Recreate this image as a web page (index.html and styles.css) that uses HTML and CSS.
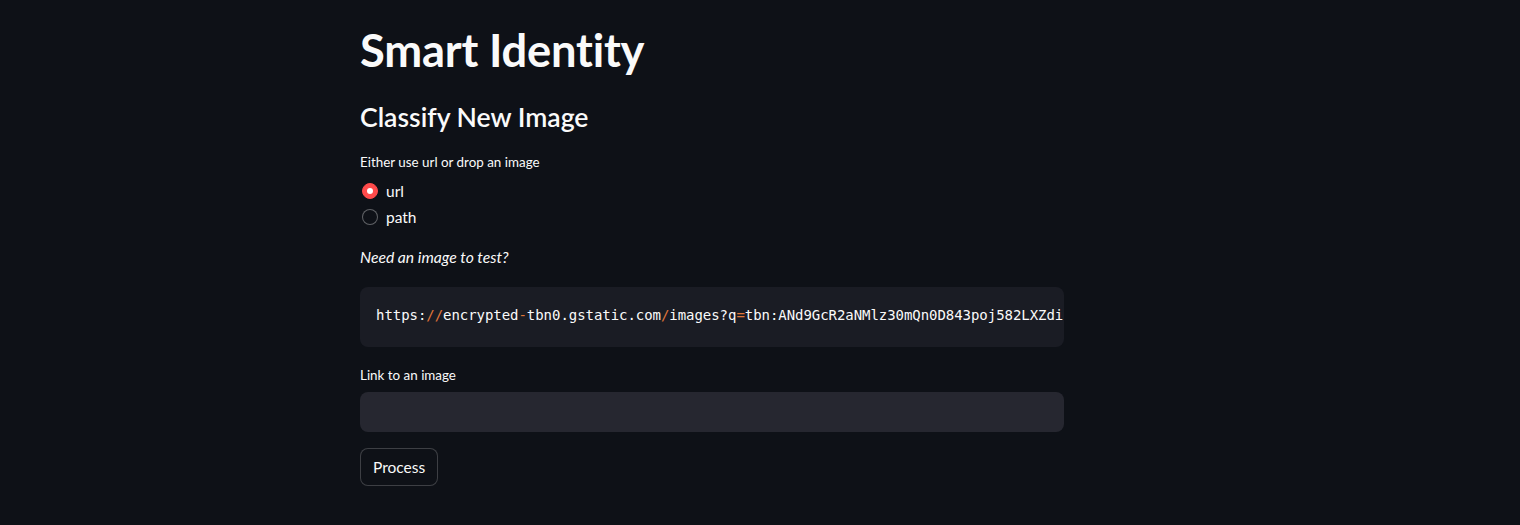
FILE: index.html
```html
<!DOCTYPE html>
<html lang="en">
<head>
<meta charset="utf-8">
<title>Smart Identity</title>
<link rel="stylesheet" href="styles.css">
</head>
<body>
<main class="app">
  <section class="block">
    <h1 class="title">Smart Identity</h1>
    <h2 class="subtitle">Classify New Image</h2>

    <div class="radio-group">
      <div class="widget-label">Either use url or drop an image</div>
      <div class="radio-options">
        <label class="radio-option">
          <span class="radio-dot checked"></span>
          <span class="radio-text">url</span>
        </label>
        <label class="radio-option">
          <span class="radio-dot"></span>
          <span class="radio-text">path</span>
        </label>
      </div>
    </div>

    <p class="hint"><em>Need an image to test?</em></p>

    <div class="code-block">
      <pre class="code"><code>https:<span class="op">//</span>encrypted<span class="op">-</span>tbn0<span class="pn">.</span>gstatic<span class="pn">.</span>com<span class="op">/</span>images?q<span class="op">=</span>tbn:ANd9GcR2aNMlz30mQn0D843poj582LXZdi</code></pre>
    </div>

    <div class="text-input">
      <div class="widget-label">Link to an image</div>
      <div class="input-box"></div>
    </div>

    <div class="button-row">
      <button class="btn">Process</button>
    </div>
  </section>
</main>
</body>
</html>
```

FILE: styles.css
```css
html, body {
  margin: 0;
  padding: 0;
  background: #0e1117;
  color: #fafafa;
  font-family: "Source Sans Pro", "Lato", "Noto Sans", sans-serif;
  height: 100%;
}

.app {
  display: flex;
  padding-left: 360px;
}

.block {
  width: 704px;
  display: flex;
  flex-direction: column;
}

.title {
  font-size: 45.3px;
  font-weight: 700;
  line-height: 1.2;
  margin: 23px 0 0 0;
  letter-spacing: -0.2px;
}

.subtitle {
  font-size: 26.6px;
  font-weight: 600;
  line-height: 1.2;
  margin: 25px 0 0 0;
}

.radio-group {
  margin-top: 18px;
}

.widget-label {
  font-size: 13.4px;
  line-height: 20px;
  color: #fafafa;
}

.radio-options {
  display: flex;
  flex-direction: column;
  margin-top: 7px;
  gap: 2px;
}

.radio-option {
  display: flex;
  align-items: center;
  height: 24px;
  gap: 8px;
  font-size: 15.5px;
}

.radio-dot {
  width: 14px;
  height: 14px;
  border-radius: 50%;
  border: 1px solid rgba(250, 250, 250, 0.35);
  background: #0e1117;
  margin-left: 2px;
  position: relative;
  box-sizing: content-box;
}

.radio-dot.checked {
  background: #ff4b4b;
  border-color: #ff4b4b;
}

.radio-dot.checked::after {
  content: "";
  position: absolute;
  left: 4px;
  top: 4px;
  width: 6px;
  height: 6px;
  border-radius: 50%;
  background: #ffffff;
}

.radio-text {
  line-height: 24px;
}

.hint {
  margin: 16px 0 0 0;
  font-size: 15.7px;
  line-height: 24px;
}

.code-block {
  margin-top: 18px;
  background: #1a1c24;
  border-radius: 8px;
  height: 60px;
  display: flex;
  align-items: center;
  overflow: hidden;
}

.code {
  margin: 0;
  padding: 0 16px 4px 16px;
  font-family: "DejaVu Sans Mono", "Liberation Mono", monospace;
  font-size: 14px;
  line-height: 20px;
  color: #fafafa;
  white-space: pre;
  overflow: hidden;
  width: 100%;
  box-sizing: border-box;
  letter-spacing: -0.05px;
}

.op {
  color: #e0763a;
}

.pn {
  color: #fafafa;
}

.text-input {
  margin-top: 18px;
}

.text-input .widget-label {
  margin-bottom: 7px;
}

.input-box {
  height: 40px;
  background: #262730;
  border-radius: 8px;
}

.button-row {
  margin-top: 16px;
}

.btn {
  font-family: inherit;
  font-size: 15.5px;
  color: #fafafa;
  background: #0e1117;
  border: 1px solid rgba(250, 250, 250, 0.2);
  border-radius: 8px;
  height: 38px;
  padding: 0 12px;
  line-height: 1.6;
}
```
